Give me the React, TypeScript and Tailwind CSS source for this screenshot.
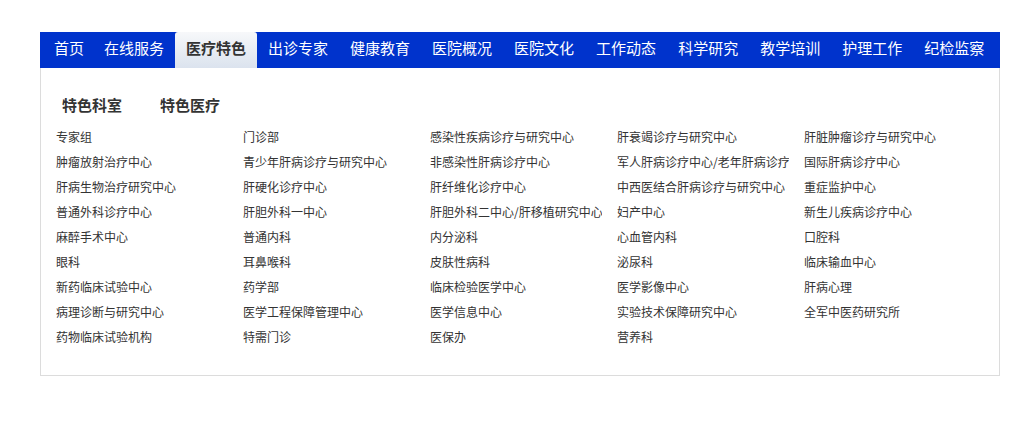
import React from "react";

const nav = ["首页", "在线服务", "医疗特色", "出诊专家", "健康教育", "医院概况", "医院文化", "工作动态", "科学研究", "教学培训", "护理工作", "纪检监察"];

const items = [
  "专家组", "门诊部", "感染性疾病诊疗与研究中心", "肝衰竭诊疗与研究中心", "肝脏肿瘤诊疗与研究中心",
  "肿瘤放射治疗中心", "青少年肝病诊疗与研究中心", "非感染性肝病诊疗中心", "军人肝病诊疗中心/老年肝病诊疗中心", "国际肝病诊疗中心",
  "肝病生物治疗研究中心", "肝硬化诊疗中心", "肝纤维化诊疗中心", "中西医结合肝病诊疗与研究中心", "重症监护中心",
  "普通外科诊疗中心", "肝胆外科一中心", "肝胆外科二中心/肝移植研究中心", "妇产中心", "新生儿疾病诊疗中心",
  "麻醉手术中心", "普通内科", "内分泌科", "心血管内科", "口腔科",
  "眼科", "耳鼻喉科", "皮肤性病科", "泌尿科", "临床输血中心",
  "新药临床试验中心", "药学部", "临床检验医学中心", "医学影像中心", "肝病心理",
  "病理诊断与研究中心", "医学工程保障管理中心", "医学信息中心", "实验技术保障研究中心", "全军中医药研究所",
  "药物临床试验机构", "特需门诊", "医保办", "营养科",
];

export default function App() {
  return (
    <div className="w-[1036px] h-[424px] bg-white pt-[32px] font-['Noto_Sans_CJK_SC','Noto_Sans',sans-serif]">
      <div className="ml-[40px] w-[960px]">
        <ul className="flex h-[36px] bg-[#0033cc] pl-[5px]">
          {nav.map((n, i) => {
            const active = n === "医疗特色";
            const pad = i === 0 ? "px-[9px]" : "px-[11px]";
            return (
              <li
                key={n}
                className={
                  active
                    ? `${pad} h-[36px] leading-[31px] text-[15px] font-bold text-[#333] rounded-t-[3px] bg-gradient-to-b from-[#f7f8fa] to-[#dbe3ee]`
                    : `${pad} h-[36px] leading-[31px] text-[15px] text-white`
                }
              >
                {n}
              </li>
            );
          })}
        </ul>
        <div className="h-[308px] border border-t-0 border-[#dcdcdc] bg-white">
          <div className="flex pt-[25px] pl-[21px] text-[15px] font-bold text-[#333] leading-[24px]">
            <span>特色科室</span>
            <span className="ml-[38px]">特色医疗</span>
          </div>
          <div className="mt-[7px] pl-[15px] grid grid-cols-[repeat(5,187px)] text-[12px] text-[#333]">
            {items.map((t) => (
              <div key={t} className="w-[172px] h-[25px] leading-[25px] overflow-hidden whitespace-nowrap">
                {t}
              </div>
            ))}
          </div>
        </div>
      </div>
    </div>
  );
}
